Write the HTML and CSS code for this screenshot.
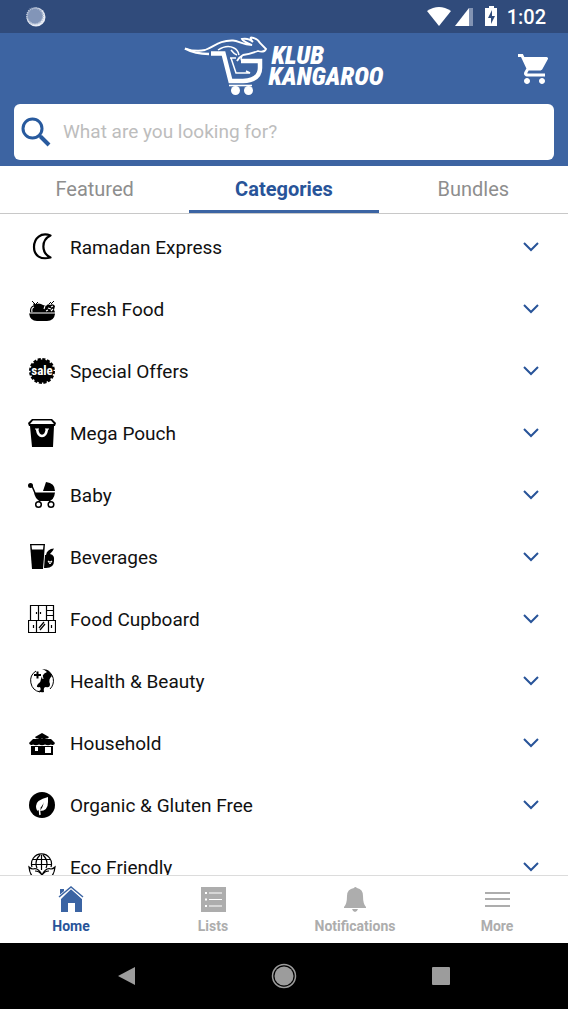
FILE: index.html
```html
<!DOCTYPE html>
<html lang="en">
<head>
<meta charset="utf-8">
<meta name="viewport" content="width=device-width, initial-scale=1">
<title>Klub Kangaroo</title>
<link rel="stylesheet" href="styles.css">
</head>
<body>
<div class="status">
  <svg width="20" height="20" viewBox="0 0 20 20"><circle cx="10" cy="10" r="9.5" fill="#e9edf5"/><circle cx="9" cy="9" r="8" fill="#8295b8"/><circle cx="9" cy="9" r="8" fill="none" stroke="#b5c0d5" stroke-width="2" stroke-dasharray="1 1"/></svg>
  <div class="status-right">
    <svg width="72" height="22" viewBox="0 0 72 22" fill="#fff"><path d="M0 5Q12-3 24 5L12 20Z"/><path d="M42 2v18h4V2Z" fill="#8293b3"/><path d="M42 2v18H28Z"/><path d="M62 0h5v2h3v18H58V2h4Z"/><path d="M65 4l-4 8h3v6l4-8h-3Z" fill="#304b7b"/></svg>
    <span>1:02</span>
  </div>
</div>
<header class="header">
  <div class="brand-row">
    <div class="brand">
      <svg width="84" height="60" viewBox="0 0 84 60" fill="none" stroke="#fff">
        <path d="M1 12.5Q12 16 21 14C30 11 35 4 49 4.500C55 5 59 9 68 9C63 7 59 5 58 3C64 2 67 4 69 6C67 4 66 2 67 1.500C71 2 74 3 76 7L82 13Q80 17 74 15Q66 18 59 19Q55 21 53 25" stroke-width="1.800"/>
        <path d="M1 12.500Q11 18 25 18" stroke-width="2.500"/>
        <path d="M34 14Q43 8 50 12Q54 14 55 19M47 14Q50 18 53 19M58 20Q55 25 61 25" stroke-width="1.500"/>
        <path d="M27 17.500H39.500L46.500 45H59Q76 44 76 32V25H57" stroke-width="4.500"/>
        <path d="M46 22H52M47 22L52 37H66L62 35" stroke-width="1.500"/>
        <path d="M45 49.500H68" stroke-width="1.600"/>
        <g fill="#fff" stroke="none"><circle cx="51.5" cy="54.500" r="4.500"/><circle cx="64.500" cy="54.500" r="4.500"/></g>
      </svg>
      <div class="brand-name"><span class="brand-top">KLUB</span><span>KANGAROO</span></div>
    </div>
    <button class="cart" aria-label="Cart"><svg width="30" height="30" viewBox="1 2 20 20" fill="#fff"><path d="M7 18c-1.100 0-2 .9-2 2s.9 2 2 2 2-.9 2-2-.9-2-2-2zM1 2v2h2l3.600 7.590-1.350 2.450c-.16.280-.25.610-.25.960 0 1.100.9 2 2 2h12v-2H7.420c-.14 0-.25-.11-.25-.25l.03-.12.9-1.630h7.450c.75 0 1.410-.41 1.750-1.030l3.580-6.490A1 1 0 0 0 20 4H5.210l-.94-2H1zm16 16c-1.100 0-2 .9-2 2s.9 2 2 2 2-.9 2-2-.9-2-2-2z"/></svg></button>
  </div>
  <label class="search">
    <svg width="30" height="30" viewBox="0 0 30 30" fill="none" stroke="#285a9e"><circle cx="11.500" cy="11.500" r="9.500" stroke-width="3"/><path d="M18 18l2 2" stroke-width="3"/><path d="M19.500 19.500L28 28" stroke-width="4"/></svg>
    <input type="search" aria-label="Search products" placeholder="What are you looking for?">
  </label>
</header>
<nav class="tabs" role="tablist">
  <button class="tab" role="tab">Featured</button>
  <button class="tab tab-active" role="tab" aria-selected="true">Categories</button>
  <button class="tab" role="tab">Bundles</button>
</nav>
<main class="list">
  <button class="row"><svg class="icon" viewBox="0 0 28 28"><path d="M22.500 2.500C13-1 6 5 6 14S13 27 22.500 24.500C13 20 13 7 22.500 2.500Z" fill="none" stroke="#000" stroke-width="2.200" stroke-linejoin="round"/></svg><span>Ramadan Express</span><svg class="chevron" viewBox="0 0 16 10"><path d="M1 1l7 7 7-7"/></svg></button>
  <button class="row"><svg class="icon" viewBox="0 0 28 28"><path d="M2 18Q1 12 6 10Q11 7 15 10L18 11Q20 8 22 10Q25 8 27 11L26 15Q27 16 27 19Q26 26 19 26H9Q2 26 1 18Z"/><path d="M8 10L4 6M8 10l-3-1M8 9l2-2M23 9l3-3M21 9l2-2" stroke="#000" stroke-width="1" fill="none"/><path d="M4 17q-1-4 2-5M1 18h26M17 11l-1 3M20 13l3 1M23 16l2-2M18 16l2-1M25 11l-2 1" stroke="#fff" stroke-width="1.100" fill="none"/></svg><span>Fresh Food</span><svg class="chevron" viewBox="0 0 16 10"><path d="M1 1l7 7 7-7"/></svg></button>
  <button class="row"><svg class="icon" viewBox="0 0 28 28"><circle cx="14" cy="14" r="11.500"/><circle cx="14" cy="14" r="11.500" fill="none" stroke="#000" stroke-width="3" stroke-dasharray="3 1.515"/><text class="sale" x="14" y="18" text-anchor="middle">sale</text></svg><span>Special Offers</span><svg class="chevron" viewBox="0 0 16 10"><path d="M1 1l7 7 7-7"/></svg></button>
  <button class="row"><svg class="icon" viewBox="0 0 28 28"><path d="M4 0H24L28 4L27 7H26L25 28H4L2 7H1L0 4Z"/><path d="M5 1.500H23L26 5H2Z" fill="#fff"/><path d="M9 10Q10 17 14 17T19 10" fill="none" stroke="#fff" stroke-width="2.500"/><path d="M7 10h4M17 10h4" stroke="#fff"/></svg><span>Mega Pouch</span><svg class="chevron" viewBox="0 0 16 10"><path d="M1 1l7 7 7-7"/></svg></button>
  <button class="row"><svg class="icon" viewBox="0 0 28 28"><path d="M15 10L18 1Q27 2 27 10ZM6 11.500H27Q26 20 20 20H12Q7 18 6 11.500Z"/><circle cx="2.500" cy="4.500" r="2.500"/><path d="M4 5l3 7M12 19l-2 3M21 19l2 3" stroke="#000" stroke-width="1.500"/><g fill="#fff" stroke="#000" stroke-width="1.500"><circle cx="10.500" cy="23.500" r="2.800"/><circle cx="23" cy="23.500" r="2.800"/></g></svg><span>Baby</span><svg class="chevron" viewBox="0 0 16 10"><path d="M1 1l7 7 7-7"/></svg></button>
  <button class="row"><svg class="icon" viewBox="0 0 28 28"><path d="M2 1H17L15 26H4Z"/><path d="M3.500 2.300H15.500L15 6.500H4Z" fill="#fff"/><path d="M18 12Q19 6 26 5.500Q25 8 22 11Q27 12 26 18Q26 25 18 25H16L17 12Z"/><path d="M20 18l2 3 2-3M20 18q2 2 4 0" fill="none" stroke="#fff"/></svg><span>Beverages</span><svg class="chevron" viewBox="0 0 16 10"><path d="M1 1l7 7 7-7"/></svg></button>
  <button class="row"><svg class="icon" viewBox="0 0 28 28" fill="none" stroke="#000"><path d="M2.500 15.500V.500H25.500V15.500M10.500 1v14M18.500 1v14M18 5.500h8M18 10.500h8M.500 15.500h27v12H.500ZM8.500 15.500v12M20.500 15.500v12M8.500 7v2M12.500 7v2M5.500 20v3M23.500 20v3M11 23l5-6M12 25l5-6" stroke-width="1.200"/></svg><span>Food Cupboard</span><svg class="chevron" viewBox="0 0 16 10"><path d="M1 1l7 7 7-7"/></svg></button>
  <button class="row"><svg class="icon" viewBox="0 0 28 28"><path d="M12 25A11.500 11.500 0 0 1 8 4M18 3A11.500 11.500 0 0 1 22 22" fill="none" stroke="#000" stroke-width="1"/><path d="M6 8h7M9.500 4.500v7" stroke="#000" stroke-width="2"/><path d="M14 2Q22 2 24 9Q20 12 22 17Q22 21 18 20Q15 20 16 25Q13 26 10 24Q14 24 12 20Q7 21 10 17Q13 15 13 12Q14 7 19 5Q17 3 14 2Z"/><path d="M16 5Q13 9 15 12" stroke="#fff" fill="none"/></svg><span>Health &amp; Beauty</span><svg class="chevron" viewBox="0 0 16 10"><path d="M1 1l7 7 7-7"/></svg></button>
  <button class="row"><svg class="icon" viewBox="0 0 28 28"><path d="M7 8L14 4L21 8Q20 10 18 9.500Q16 11 14 9.500Q12 11 10 9.500Q8 10 7 8ZM5 10H23L27 14Q26 17 23 15.500Q20 17 17 15.500Q14 17 11 15.500Q8 17 5 15.500Q2 17 1 14ZM3 17H25V26H3Z"/><path d="M7 18h3v4H7ZM17 18h6v6h-6Z" fill="#fff"/></svg><span>Household</span><svg class="chevron" viewBox="0 0 16 10"><path d="M1 1l7 7 7-7"/></svg></button>
  <button class="row"><svg class="icon" viewBox="0 0 28 28"><circle cx="14" cy="14" r="13"/><path d="M20 6Q8 9 8 15Q8 19 10 20Q15 14 16 11Q15 16 12 20Q20 20 20 11Z" fill="#fff"/><path d="M12 17Q11 20 12 24" stroke="#fff" stroke-width="1.500" fill="none"/></svg><span>Organic &amp; Gluten Free</span><svg class="chevron" viewBox="0 0 16 10"><path d="M1 1l7 7 7-7"/></svg></button>
  <button class="row"><svg class="icon" viewBox="0 0 28 28" fill="none" stroke="#000" stroke-width="1.200"><path d="M4 14A10 10 0 1 1 23 14M13.500 2v15M3 11.500h21M5 6.500h17M9 15Q6 8 12 2M18 15Q21 8 15 2M14 22Q10 14 5 16Q3 16 1 14Q2 25 10 26M7 18q4 0 7 4M14 22Q18 14 23 16Q25 16 27 14Q26 25 18 26M21 18q-4 0-7 4"/></svg><span>Eco Friendly</span><svg class="chevron" viewBox="0 0 16 10"><path d="M1 1l7 7 7-7"/></svg></button>
</main>
<nav class="bottom">
  <a class="item item-active" href="#home"><svg width="26" height="26" viewBox="0 0 26 26" fill="#3b64a3"><path d="M2 3h4v3L2 10ZM13 3L24 13V26H17V17H10V26H3V13Z"/><path d="M1 11.500L13 1L25 11.500" fill="none" stroke="#fff" stroke-width="3"/><path d="M1 11L13 1L25 11" fill="none" stroke="#3b64a3" stroke-width="1.500"/></svg>Home</a>
  <a class="item" href="#lists"><svg width="26" height="26" viewBox="0 0 26 26"><path d="M1 1h25v25H1Z" fill="#adadad"/><path d="M5 7h2M5 13.500h2M5 20h2" stroke="#fff" stroke-width="2"/><path d="M9 7h13M9 13.500h13M9 20h13" stroke="#fff"/></svg>Lists</a>
  <a class="item" href="#notifications"><svg width="26" height="26" viewBox="0 0 26 26" fill="#adadad"><path d="M12 2Q13 0 15 2Q21 3 21 10Q21 18 24 21V22H2V21Q5 18 5 10Q5 3 12 2ZM10 23h6q-1 3-3 3t-3-3Z"/></svg>Notifications</a>
  <a class="item" href="#more"><svg width="26" height="26" viewBox="0 0 26 26"><path d="M1 7h25M1 13h25M1 20h25" stroke="#adadad" stroke-width="2"/></svg>More</a>
</nav>
<div class="system">
  <button aria-label="Back"><svg width="20" height="26" viewBox="0 0 20 26"><path d="M1 13L18 4V22Z" fill="#9c9c9c"/></svg></button>
  <button aria-label="Home screen"><svg width="26" height="26" viewBox="0 0 26 26"><circle cx="13" cy="13" r="11.500" fill="none" stroke="#9c9c9c" stroke-width="1.500"/><circle cx="13" cy="13" r="9.500" fill="#9c9c9c"/></svg></button>
  <button aria-label="Recent apps"><svg width="20" height="26" viewBox="0 0 20 26"><rect x="1" y="4" width="18" height="18" rx="1" fill="#9c9c9c"/></svg></button>
</div>
</body>
</html>
```

FILE: styles.css
```css
* { box-sizing: border-box; }
body {
  margin: 0;
  height: 100vh;
  display: flex;
  flex-direction: column;
  background: #fff;
  color: #111;
  font-family: Roboto, sans-serif;
}
button {
  border: 0;
  padding: 0;
  background: none;
  color: inherit;
  font: inherit;
  cursor: pointer;
}
svg { display: block; flex: none; }
.status {
  display: flex;
  align-items: center;
  justify-content: space-between;
  height: 33px;
  padding: 0 22px 0 26px;
  background: #304b7b;
  color: #fff;
  font-size: 20px;
}
.status-right { display: flex; align-items: center; gap: 8px; font-weight: 500; }
.header { padding: 0 14px 6px; background: #3d64a2; }
.brand-row {
  display: grid;
  grid-template-columns: 1fr auto 1fr;
  align-items: center;
  height: 71px;
  padding: 0 6px;
}
.brand { grid-column: 2; display: flex; align-items: center; padding-bottom: 6px; }
.brand-name {
  display: flex;
  flex-direction: column;
  color: #fff;
  font: italic 900 25px/21px "Roboto Condensed", Roboto, sans-serif;
}
.brand-top { padding-left: 3px; }
.cart { justify-self: end; }
.search {
  display: flex;
  align-items: center;
  gap: 12px;
  height: 56px;
  padding: 0 7px;
  border-radius: 6px;
  background: #fff;
}
.search input {
  flex: 1;
  min-width: 0;
  padding: 0;
  border: 0;
  outline: 0;
  background: none;
  font: 19px/24px Roboto, sans-serif;
}
.search input::placeholder { color: #bdbdbd; opacity: 1; }
.tabs {
  display: grid;
  grid-template-columns: repeat(3, 1fr);
  height: 48px;
  border-bottom: 1px solid #c8c8c8;
}
.tab { padding-top: 2px; border-bottom: 3px solid transparent; color: #8e8e8e; font-size: 20px; }
.tab-active { border-color: #3b64a3; color: #285499; font-weight: 700; }
.list {
  flex: 1;
  min-height: 0;
  overflow-y: auto;
  scrollbar-width: none;
  padding-top: 2px;
}
.row {
  display: flex;
  align-items: center;
  gap: 14px;
  width: 100%;
  height: 62px;
  padding: 0 29px 0 28px;
  font-size: 19px;
  text-align: left;
}
.row span { flex: 1; }
.icon { width: 28px; height: 28px; }
.sale { fill: #fff; font: bold 13px "Roboto Condensed", Roboto, sans-serif; }
.chevron { width: 16px; height: 10px; fill: none; stroke: #285499; stroke-width: 2; }
.bottom {
  display: grid;
  grid-template-columns: repeat(4, 1fr);
  height: 68px;
  border-top: 1px solid #dcdcdc;
}
.item {
  display: flex;
  flex-direction: column;
  align-items: center;
  gap: 5px;
  padding-top: 10px;
  color: #adadad;
  font-size: 14px;
  line-height: 18px;
  font-weight: 700;
  text-decoration: none;
}
.item-active { color: #285499; }
.system {
  display: flex;
  align-items: center;
  justify-content: space-between;
  height: 66px;
  padding: 0 117px;
  background: #000;
}
```
